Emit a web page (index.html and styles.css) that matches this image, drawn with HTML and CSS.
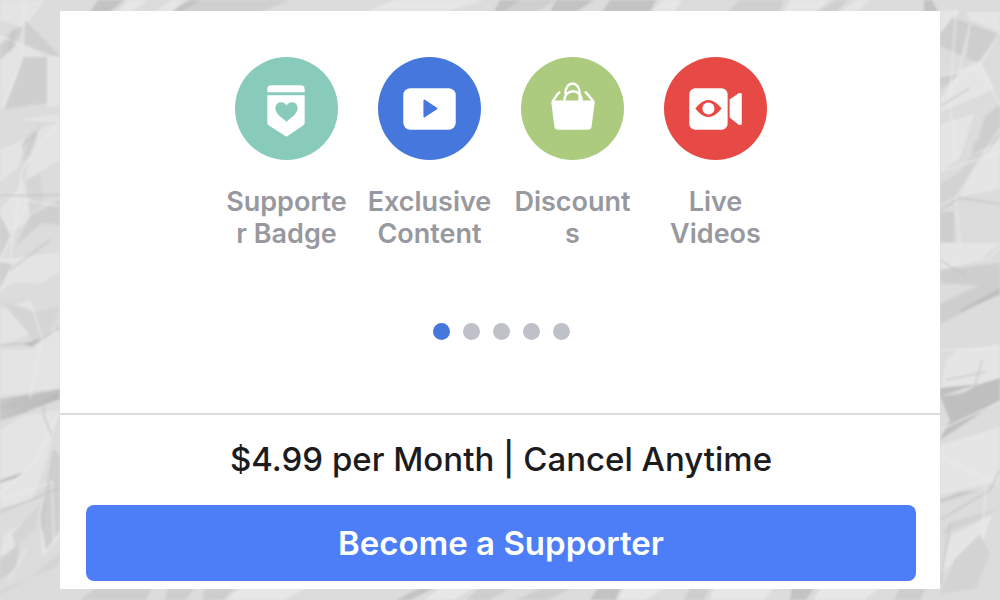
FILE: index.html
```html
<!DOCTYPE html>
<html lang="en">
<head>
    <meta charset="UTF-8">
    <meta name="viewport" content="width=device-width, initial-scale=1.0">
    <title>Become a Supporter</title>
    <link rel="stylesheet" href="styles.css">
</head>
<body>
    <!-- crumpled paper -->
    <svg class="paper" viewBox="0 0 1000 600" preserveAspectRatio="none" aria-hidden="true">
        <defs>
            <linearGradient id="fold" x1="0" y1="0" x2="1" y2="0">
                <stop offset="0" stop-color="#c6c6c6"/>
                <stop offset="1" stop-color="#b8b8b8"/>
            </linearGradient>
            <filter id="soft" x="0" y="0" width="100%" height="100%">
                <feGaussianBlur stdDeviation="0.8"/>
            </filter>
        </defs>
        <rect width="1000" height="600" fill="#dcdcdc"/>
        <g filter="url(#soft)">
            <!-- left side -->
            <g fill="#e4e4e4">
                <path d="M0 0h45L24 28 0 20zM0 36l45 20-23 22L3 109H0zM16 120l44-6v8l-44-2zM48 57h12v50H48z"/>
                <path d="M38 130l22-8v38l-34 20 4-28zM0 150l26-12-8 30-18 14zM0 210l24-30 6 40-30 20zM0 260l60-8v20l-20 12-26-2-14 10z"/>
                <path d="M0 310l30-10 10 30-40 16zM0 350l34-1 18-22 8 6v55l-60 8zM0 430l22-14 38-6-16 60-12 30-32 8zM4 535l36-25-6 20-22 22-12 4zM40 520l20-12v30l-18 20z"/>
            </g>
            <g fill="#cfcfcf">
                <path d="M10 32l14-7-8 20L0 60V46zM17 76l5-19h26v46L4 109zM0 215l10 20-10 20zM16 245l26-22 18 2v-25L30 216zM0 262l12 2-12 24z"/>
                <path d="M60 455l-6-5-6 40-8 26 6 34 14-20zM0 560l20-18-4 26-16 12zM25 20l35 36h-12L24 45z"/>
            </g>
            <g fill="#d5d5d5">
                <path d="M24 140l18-18-12 36-8-6zM26 180l14-6 4 30-14 10zM0 300l36 12 24-6-10 28-14 10L26 330zM12 534l28-30-4 24-20 20zM0 590l60-24v-14l-32 28-28 14z"/>
            </g>
            <path fill="url(#fold)" d="M0 399l60-9v9l-22 8-14 6-24 8z"/>
            <path fill="#c0c0c0" d="M44 392l16-3v4L24 406l-24 3v-2zM0 480l24-8-8 6-16 5zM24 344l16-6-8 9z"/>
            <path class="ridge" d="M0 36l60 24M24 0l-2 60L3 108M60 120L22 170 10 260M0 196l60 10M0 262l30-65M30 300l12 38-12 60M60 412l-28 54-32 28M26 550L8 582M0 500l52-18 2 60M48 57v50"/>
            <path class="crease" d="M13 30l-5 20M16 28l-6 24M22 146l14-14-12 28M0 196l60-1M50 240l-40 30M0 345l36-2 24-16M42 390l2 26 8 20M54 450l-8 44-4 36M0 512l60-24"/>

            <!-- right side -->
            <g fill="#e5e5e5">
                <path d="M940 10h20l-20 28zM966 12h34v20l-30-12zM960 70l20-10 14 28-14 8-40 16v-12zM940 124l34-10-14 44-20 14z"/>
                <path d="M962 185l38-48v52l-40 8zM940 243h60l-20 16-40 10zM958 350l30-4 12-2v46l-60 2 6-32zM940 445l60-18v54l-60 14zM952 535l40-20-10 28-42 30z"/>
            </g>
            <g fill="#cecece">
                <path d="M953 17l18 7-8 32-23-10v-12zM971 24l29 11-22 27-12-4zM940 76l20-2-20 16zM984 118l16-14v28l-24 16z"/>
                <path d="M974 142l26-8-6 10-22 10zM940 212l14 0v30h-14zM940 270l60-7v24l-60-4zM940 304l42-20 18-4v14l-60 30z"/>
            </g>
            <g fill="#d3d3d3">
                <path d="M960 172l12-18 12-2-24 42-20 10v-20zM954 560l26-26 10 20-14 34-36 6zM950 522l50-14-26 14-34 14z"/>
            </g>
            <path fill="#bfbfbf" d="M940 396l60-18v22l-60 40 10-20zM940 396l20-2 20-10-40 4zM960 310l40-22v6l-40 18z"/>
            <path fill="#c8c8c8" d="M940 500l20-8 18-1-38 12z"/>
            <path class="ridge" d="M940 76l38-8 22-36M980 66l20 40M1000 128l-44 70 4 50M956 10l-6 90 6 60M940 172l60-20M940 268l50-10 10-12M940 350l60-2M940 456l60 30M986 480l-4 60M940 430l60-28M970 24l-14 60"/>
            <path class="crease" d="M940 106l30-18M940 210l20-12 40 6M940 260l26 16M982 360l-8 30M940 520l50-30 10-20M950 524l-10 60M946 380l40-8"/>

            <!-- top strip -->
            <g fill="#c3c3c3">
                <path d="M98 0h26l-14 12H90zM190 0h12l-20 12h-12zM500 0h20l-16 12h-10zM556 0h38l-18 12h-26zM610 0h46l-6 12h-48zM924 0h8l6 12h-14z"/>
            </g>
            <path fill="#cfcfcf" d="M200 0h90l-30 12H184zM520 0h36l-20 12h-32zM740 0h44l-4 12h-52zM836 0h12l-12 12h-18z"/>
            <path fill="#e6e6e6" d="M128 0h20l-16 12h-14zM172 0h12l-12 12h-18zM395 0h90l-40 12h-80zM662 0h20l-8 12h-22zM790 0h40l-16 12h-30zM856 0h14l-14 12h-16z"/>
            <!-- bottom strip -->
            <path fill="#c3c3c3" d="M420 588h14l-24 12h-14zM598 588h22l-4 12h-26zM792 588h22l-8 12h-16z"/>
            <path fill="#cecece" d="M96 588h56l-6 12h-66zM168 588h26l-8 12h-22zM205 588h30l-12 12h-20zM480 588h30l-20 12h-24zM542 588h30l-26 12h-30zM690 588h20l-6 12h-20zM900 588h26l-6 12h-26z"/>
            <path fill="#e7e7e7" d="M240 588h66l-22 12h-58zM440 588h34l-20 12h-30zM625 588h40l-20 12h-28zM714 588h60l-10 12h-54zM820 588h60l-16 12h-50z"/>
        </g>
    </svg>

    <main class="card">
        <section class="benefits">
            <ul class="benefit-list">
                <li class="benefit">
                    <svg class="benefit-icon" viewBox="0 0 102 102" aria-hidden="true">
                        <circle cx="51" cy="51" r="51" fill="#88cbbb"/>
                        <path fill="#fff" d="M32 35v-3q0-4 4-4h29q4 0 4 4v3zM32 38h37v27q0 2-2 3L51 79 34 68q-2-1-2-3z"/>
                        <path fill="#88cbbb" d="M51 64C46 60 40 56 40 51c0-7 8-8 11-3 3-5 11-4 11 3 0 5-6 9-11 13z"/>
                    </svg>
                    <span class="benefit-label">Supporter Badge</span>
                </li>
                <li class="benefit">
                    <svg class="benefit-icon" viewBox="0 0 102 102" aria-hidden="true">
                        <circle cx="51" cy="51" r="51" fill="#4577dd"/>
                        <rect x="25" y="31" width="52" height="41" rx="7" fill="#fff"/>
                        <path fill="#4577dd" d="M45 43q0-1 1-1l12 8q2 1 0 2l-12 8q-1 0-1-1z"/>
                    </svg>
                    <span class="benefit-label">Exclusive Content</span>
                </li>
                <li class="benefit">
                    <svg class="benefit-icon" viewBox="0 0 102 102" aria-hidden="true">
                        <circle cx="51" cy="51" r="51" fill="#accb7e"/>
                        <path fill="#fff" d="M31 43h41q1 0 1 2l-3 23q0 4-4 4H37q-4 0-4-4l-3-23q0-2 1-2z"/>
                        <path fill="none" stroke="#fff" stroke-width="2.4" stroke-linecap="round" d="M32 43l4-6 2-2M71 43l-5-6-2-2M43 43c0-12 17-12 17 0M44 36c0-13 14-13 14 0v7"/>
                    </svg>
                    <span class="benefit-label">Discounts</span>
                </li>
                <li class="benefit">
                    <svg class="benefit-icon" viewBox="0 0 102 102" aria-hidden="true">
                        <circle cx="51" cy="51" r="51" fill="#e74a45"/>
                        <rect x="25" y="31" width="38" height="41" rx="6" fill="#fff"/>
                        <path fill="#fff" d="M65 42l9-6q3-1 3 1v29q0 2-3 1l-9-7z"/>
                        <path fill="#e74a45" d="M31 51q13-17 26 0-13 17-26 0z"/>
                        <circle cx="44" cy="51" r="6" fill="#fff"/>
                    </svg>
                    <span class="benefit-label">Live Videos</span>
                </li>
            </ul>
            <div class="dots">
                <span class="dot active"></span>
                <span class="dot"></span>
                <span class="dot"></span>
                <span class="dot"></span>
                <span class="dot"></span>
            </div>
        </section>
        <section class="subscribe">
            <p class="price">$4.99 per Month | Cancel Anytime</p>
            <button class="supporter-button" type="button">Become a Supporter</button>
        </section>
    </main>
</body>
</html>
```

FILE: styles.css
```css
* {
    box-sizing: border-box;
}
body {
    margin: 0;
    min-height: 100vh;
    padding: 11px 6%;
    font-family: Inter, "Liberation Sans", sans-serif;
    background-color: #dcdcdc;
}
.paper {
    position: absolute;
    top: 0;
    left: 0;
    z-index: -1;
    width: 100%;
    height: 100%;
}
.ridge {
    fill: none;
    stroke: #ebebeb;
    stroke-width: 2;
    opacity: 0.6;
}
.crease {
    fill: none;
    stroke: #bebebe;
    stroke-width: 2;
    opacity: 0.5;
}
.card {
    background: #fff;
}
.benefits {
    padding: 46px 24px 73px 26px;
    border-bottom: 2px solid #dcdcde;
}
.benefit-list {
    display: flex;
    justify-content: center;
    gap: 16px;
    margin: 0;
    padding: 0;
    list-style: none;
}
.benefit {
    display: flex;
    flex-direction: column;
    align-items: center;
    gap: 26px;
    width: 127px;
}
.benefit-icon {
    width: 103px;
    height: 103px;
}
.benefit-label {
    width: 100%;
    font-size: 27px;
    font-weight: 600;
    line-height: 32px;
    text-align: center;
    color: #98989f;
    overflow-wrap: break-word;
}
.dots {
    display: flex;
    justify-content: center;
    gap: 13px;
    margin-top: 73px;
}
.dot {
    width: 17px;
    height: 17px;
    border-radius: 50%;
    background-color: #bfc1c8;
}
.dot.active {
    background-color: #4577dd;
}
.subscribe {
    padding: 24px 24px 8px 26px;
}
.price {
    margin: 0 0 26px;
    font-size: 33px;
    font-weight: 500;
    line-height: 40px;
    text-align: center;
    color: #1c1c1f;
}
.supporter-button {
    display: block;
    width: 100%;
    padding: 18px;
    border: none;
    border-radius: 8px;
    background-color: #4d7ef7;
    color: #fff;
    font-family: inherit;
    font-size: 33px;
    font-weight: 600;
    line-height: 40px;
    cursor: pointer;
}
.supporter-button:hover {
    background-color: #3d6de4;
}
```
